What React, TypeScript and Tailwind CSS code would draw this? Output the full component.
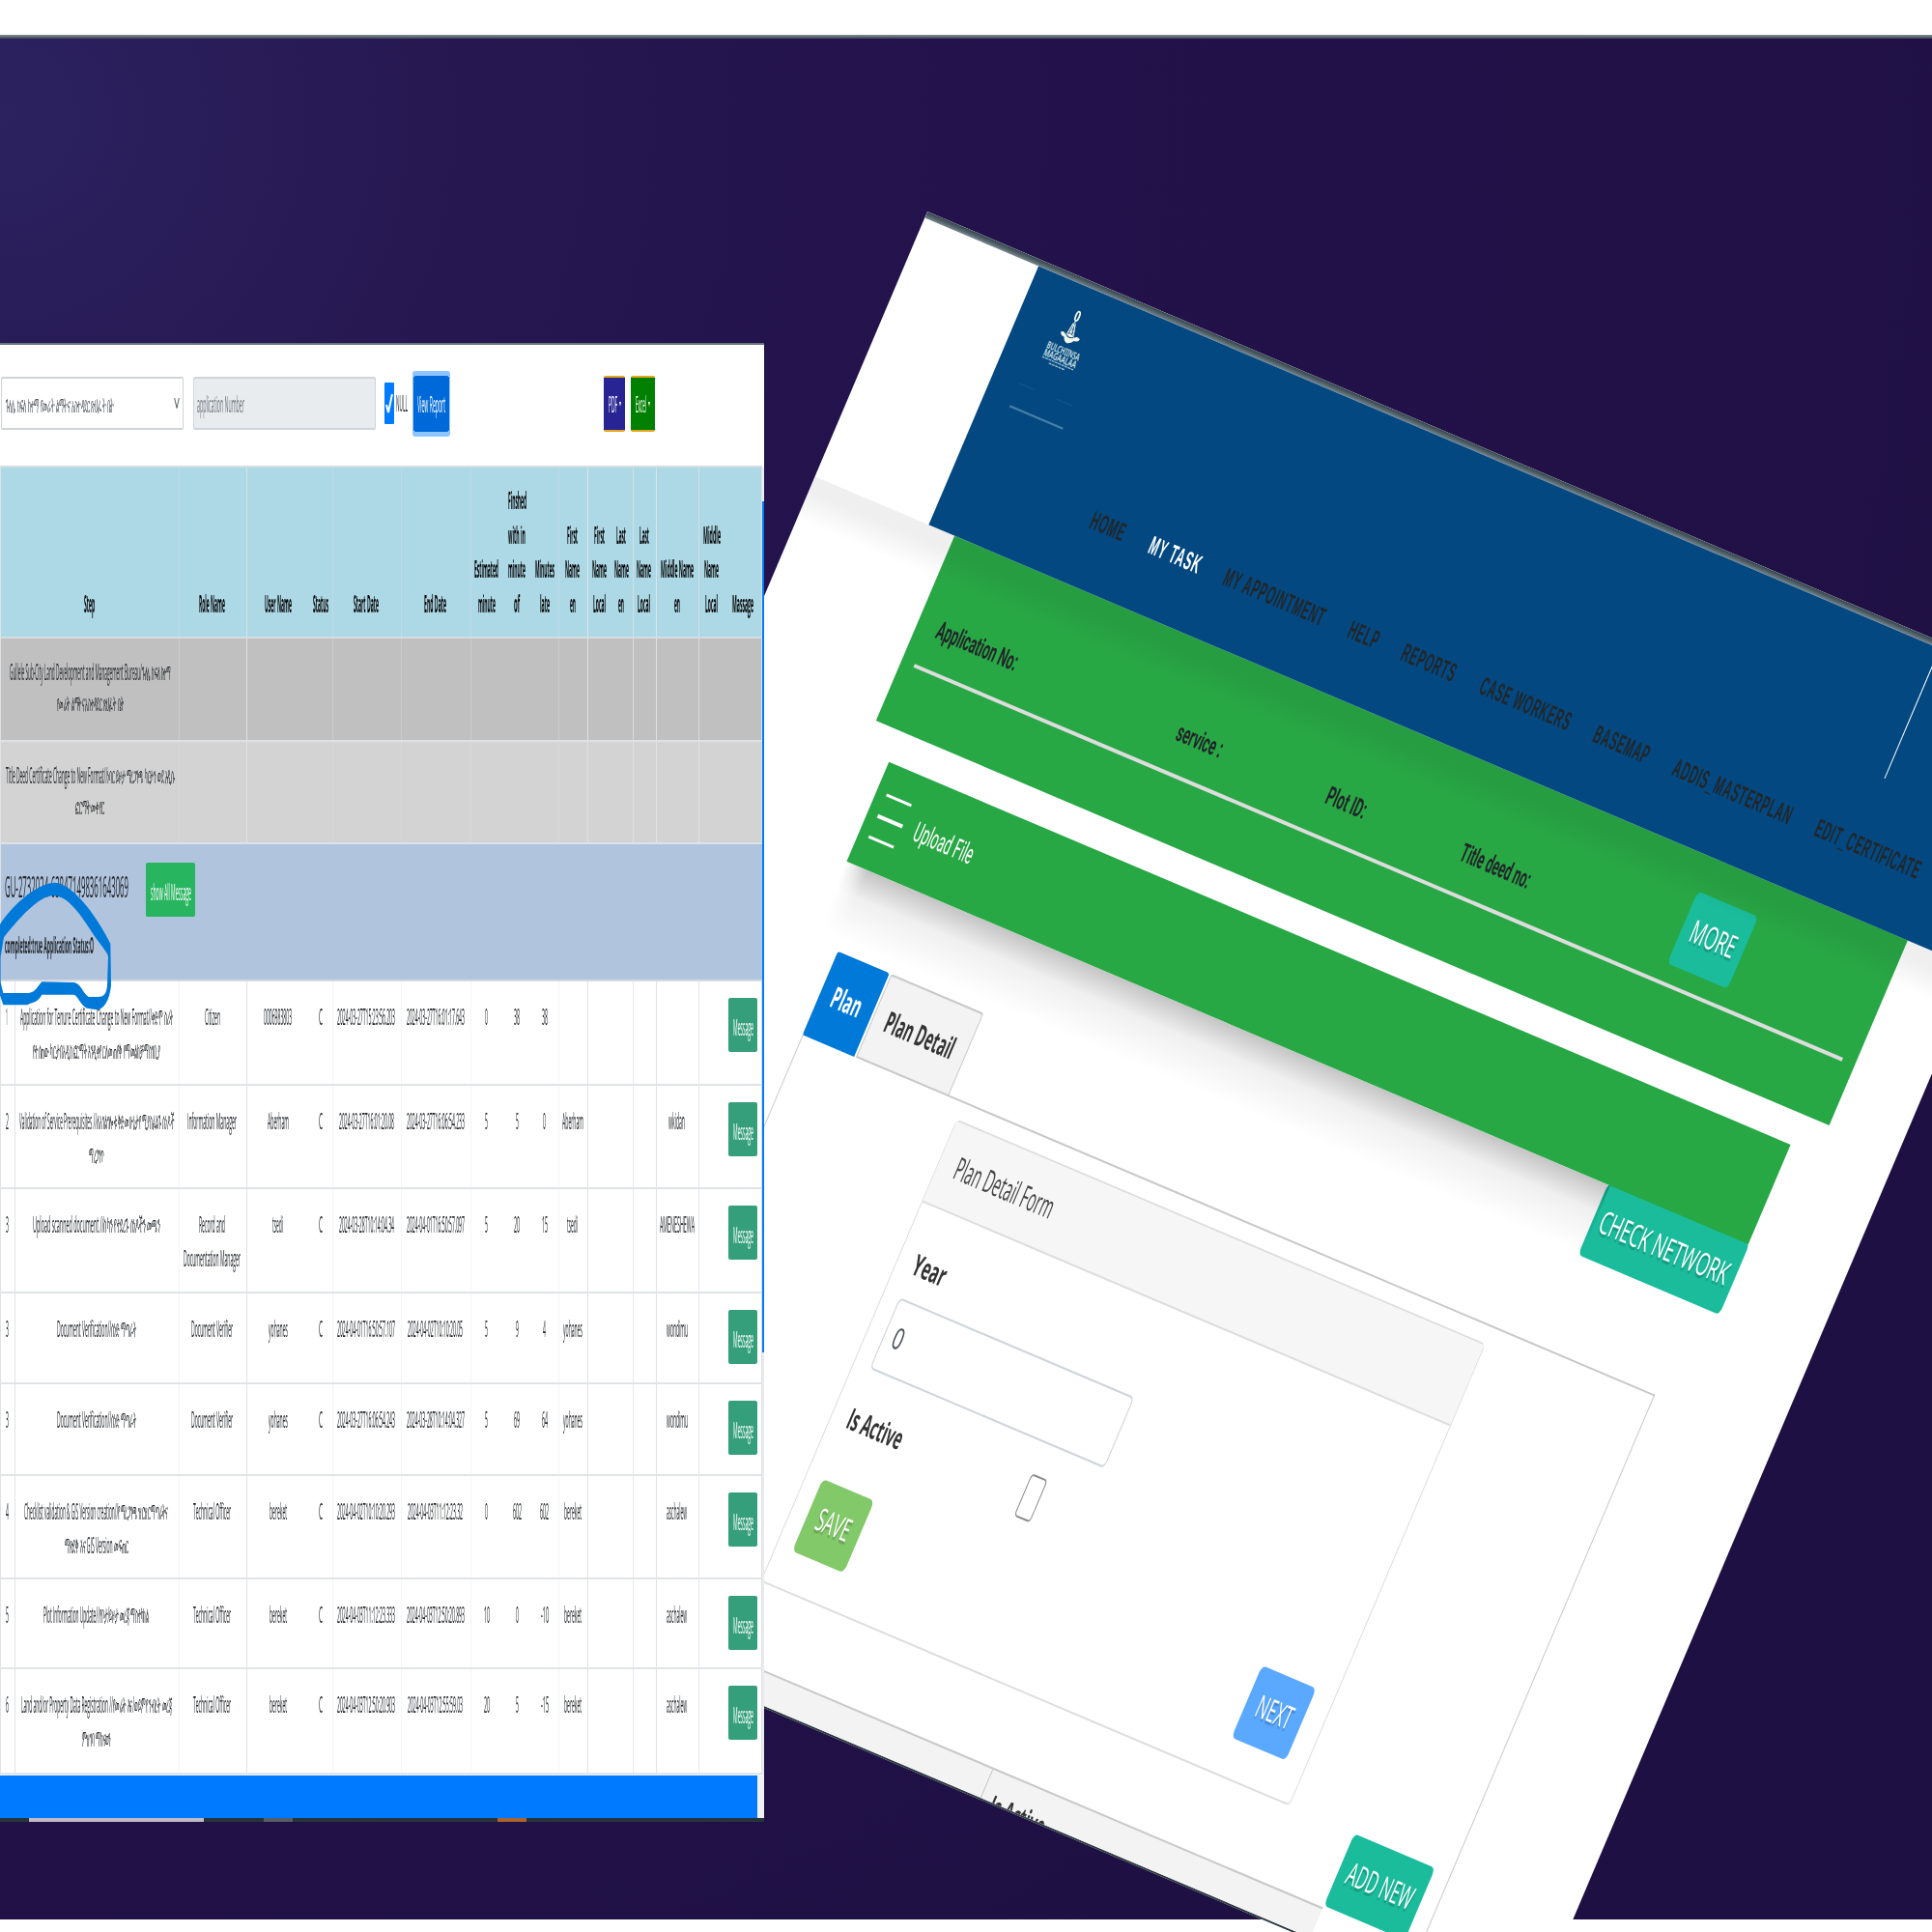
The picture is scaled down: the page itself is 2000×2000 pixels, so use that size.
import { useLayoutEffect, useRef, useState } from "react";
import type { ReactNode } from "react";
import clsx from "clsx";

/** A single line of text squeezed horizontally to an exact width. */
function Fit({ w, className, children }: { w: number; className?: string; children: ReactNode }) {
  const ref = useRef<HTMLSpanElement>(null);
  const [scale, setScale] = useState(1);
  useLayoutEffect(() => {
    const natural = ref.current?.offsetWidth ?? 0;
    if (natural > 0) setScale(w / natural);
  }, [w]);
  return (
    <span className={clsx("block shrink-0 text-left", className)} style={{ width: w }}>
      <span ref={ref} className="inline-block origin-left whitespace-nowrap" style={{ transform: `scaleX(${scale})` }}>
        {children}
      </span>
    </span>
  );
}

type Line = [text: string, width: number];

const COLS = "grid grid-cols-[15px_170px_70px_65px_24px_71px_72px_33px_30px_28px_30px_24px_23px_24px_44px_27px_38px]";

const LINE_FAINT = "border-r border-[#dee2e6]/35";
const LINE_MID = "border-r border-[#dee2e6]/80";
const LINE_STRONG = "border-r border-[#dee2e6]";

const COL_LINES = [
  LINE_STRONG, LINE_FAINT, LINE_STRONG, "", LINE_FAINT, LINE_FAINT, LINE_FAINT, "", "", LINE_FAINT,
  LINE_STRONG, "", LINE_MID, LINE_STRONG, LINE_MID, "", LINE_STRONG,
];

const HEADERS: Line[][] = [
  [["Step", 11]],
  [["Role Name", 27]],
  [["User Name", 28]],
  [["Status", 16]],
  [["Start Date", 26]],
  [["End Date", 23]],
  [["Estimated", 25], ["minute", 18]],
  [["Finshed", 19], ["with in", 18], ["minute", 18], ["of", 6]],
  [["Minutes", 20], ["late", 10]],
  [["First", 11], ["Name", 15], ["en", 6]],
  [["First", 11], ["Name", 15], ["Local", 13]],
  [["Last", 10], ["Name", 15], ["en", 6]],
  [["Last", 10], ["Name", 15], ["Local", 13]],
  [["Middle Name", 34], ["en", 6]],
  [["Middle", 18], ["Name", 15], ["Local", 13]],
  [["Massage", 22]],
];

type Row = { h: string; cells: Line[][] };

const C: Line[] = [["C", 4]];
const none: Line[] = [];
const verifier: Line[] = [["Document Verifier", 43]];
const verification: Line[] = [["Document Verification//ሰነድ ማጣራት", 82]];
const officer: Line[] = [["Technical Officer", 39]];

const ROWS: Row[] = [
  {
    h: "h-[107.5px]",
    cells: [
      [["1", 2]],
      [["Application for Tenure Certificate Change to New Format//ቀድሞ ስሪት", 158], ["የተሰጠው ካርታ በአዲስ ፎርማት እንዲቀየር ለመጠየቅ የማመልከቻ ማስገቢያ", 132]],
      [["Citizen", 16]], [["0006983803", 29]], C,
      [["2024-03-27T15:23:56.203", 60]], [["2024-03-27T16:01:17.643", 60]],
      [["0", 3]], [["38", 6]], [["38", 6]], none, none, none, none, none, none,
    ],
  },
  {
    h: "h-[107.5px]",
    cells: [
      [["2", 3]],
      [["Validation of Service Prerequisites //ለአገልግሎቱ ቅድመ ሁኔታ የሚያስፈልጉ ሰነዶች", 160], ["ማረጋገጥ", 16]],
      [["Information Manager", 51]], [["Aberham", 22]], C,
      [["2024-03-27T16:01:20.08", 57]], [["2024-03-27T16:06:54.233", 60]],
      [["5", 3]], [["5", 3]], [["0", 3]], [["Aberham", 22]], none, none, none, [["wkidan", 17]], none,
    ],
  },
  {
    h: "h-[107.5px]",
    cells: [
      [["3", 3]],
      [["Upload scanned document //ስካን የተደረጉ ሰነዶችን መጫን", 132]],
      [["Record and", 27], ["Documentation Manager", 59]], [["tsedi", 11]], C,
      [["2024-03-28T10:14:04.34", 57]], [["2024-04-01T16:50:57.097", 60]],
      [["5", 3]], [["20", 6]], [["15", 6]], [["tsedi", 11]], none, none, none, [["AMENESHEWA", 36]], none,
    ],
  },
  {
    h: "h-[94.5px]",
    cells: [
      [["3", 3]], verification, verifier, [["yohanes", 20]], C,
      [["2024-04-01T16:50:57.107", 60]], [["2024-04-02T10:10:20.05", 57]],
      [["5", 3]], [["9", 3]], [["4", 3]], [["yohanes", 20]], none, none, none, [["wondimu", 22]], none,
    ],
  },
  {
    h: "h-[94.5px]",
    cells: [
      [["3", 3]], verification, verifier, [["yohanes", 20]], C,
      [["2024-03-27T16:06:54.243", 60]], [["2024-03-28T10:14:04.327", 60]],
      [["5", 3]], [["69", 6]], [["64", 6]], [["yohanes", 20]], none, none, none, [["wondimu", 22]], none,
    ],
  },
  {
    h: "h-[107.5px]",
    cells: [
      [["4", 3]],
      [["Checklist validation & GIS Version creation//የማረጋገጫ ዝርዝር ማጣራትና", 149], ["ማጽደቅ እና GIS Version መፍጠር", 66]],
      officer, [["bereket", 18]], C,
      [["2024-04-02T10:10:20.293", 60]], [["2024-04-03T11:12:23.32", 57]],
      [["0", 3]], [["602", 9]], [["602", 9]], [["bereket", 18]], none, none, none, [["aschalew", 21]], none,
    ],
  },
  {
    h: "h-[92.5px]",
    cells: [
      [["5", 3]], [["Plot Information Update//የቦታ/ይዞታ መረጃ ማስተካከል", 109]],
      officer, [["bereket", 18]], C,
      [["2024-04-03T11:12:23.333", 60]], [["2024-04-03T12:50:20.893", 60]],
      [["10", 6]], [["0", 3]], [["-10", 8]], [["bereket", 18]], none, none, none, [["aschalew", 21]], none,
    ],
  },
  {
    h: "h-[109.5px]",
    cells: [
      [["6", 3]],
      [["Land and/or Property Data Registration //የመሬት እና/ወይም የንብረት መረጃ", 156], ["ምዝገባ ማከናወን", 30]],
      officer, [["bereket", 18]], C,
      [["2024-04-03T12:50:20.903", 60]], [["2024-04-03T12:55:59.03", 57]],
      [["20", 6]], [["5", 3]], [["-15", 8]], [["bereket", 18]], none, none, none, [["aschalew", 21]], none,
    ],
  },
];

function Lines({ lines }: { lines: Line[] }) {
  return (
    <>
      {lines.map(([t, w], i) => (
        <Fit key={i} w={w}>{t}</Fit>
      ))}
    </>
  );
}

function GroupRow({ className, lines }: { className: string; lines: Line[] }) {
  return (
    <div className={clsx(COLS, "border-b-2 border-[#dee2e6] text-[23px] font-medium leading-[31.5px] text-[#212529]", className)}>
      <div className={clsx("col-span-2 flex flex-col items-center pt-[19px]", LINE_FAINT)}>
        <Lines lines={lines} />
      </div>
      {COL_LINES.slice(2).map((line, i) => (
        <div key={i} className={line} />
      ))}
    </div>
  );
}

function ReportWindow() {
  return (
    <section className="absolute left-0 top-[355px] z-10 w-[791px] overflow-hidden font-['Open_Sans','Noto_Sans',sans-serif]">
      <div className="relative h-[1527px] overflow-hidden border-t-2 border-[#667780] bg-white">
        <div className="flex h-[125px] items-start text-[24px] leading-[54px] text-[#495057]">
          <div className="ml-px mt-[33px] flex h-[55px] w-[189px] items-center justify-between rounded-[2px] border border-y-2 border-[#ced4da] bg-white pl-1 pr-[3px]">
            <Fit w={112} className="text-[22px] font-medium">ጉለሌ ክፍለ ከተማ የመሬት ልማትና አስተዳደር ጽህፈት ቤት</Fit>
            <svg viewBox="0 0 6 14" className="h-[14px] w-[6px] fill-none stroke-[#495057]" strokeWidth="0.9">
              <path d="M0.7 1 3 11.5 5.3 1" />
            </svg>
          </div>
          <div className="ml-[10px] mt-[33px] flex h-[55px] w-[189px] items-center rounded-[2px] border border-y-2 border-[#ced4da] bg-[#e9ecef] pl-[3px] text-[#6c757d]">
            <Fit w={49}>application Number</Fit>
          </div>
          <div className="ml-[9px] mt-[39px] flex h-[43px] w-[10px] items-center justify-center rounded-[1px] bg-[#007bff]">
            <svg viewBox="0 0 8 28" className="h-[28px] w-[8px] fill-none stroke-white" strokeWidth="2">
              <path d="M1 15 3 23 7 4" />
            </svg>
          </div>
          <Fit w={12} className="ml-[2px] mt-[33px] text-[#212529]">NULL</Fit>
          <div className="ml-[5px] mt-[27px] rounded-[3px] border-x border-y-[5px] border-[#8fc5ff]">
            <div className="flex h-[58px] w-[37px] items-center justify-center rounded-[2px] bg-[#0069d9] text-white">
              <Fit w={29}>View Report</Fit>
            </div>
          </div>
          <div className="ml-[159px] mt-[32px] flex h-[58px] w-[22px] items-center justify-center gap-[2px] rounded-[2px] border-y-2 border-[#e3a71c] bg-[#282494] text-white">
            <Fit w={9}>PDF</Fit>
            <span className="border-x-[1.5px] border-t-[5px] border-x-transparent border-t-white" />
          </div>
          <div className="ml-[6px] mt-[32px] flex h-[58px] w-[24.5px] items-center justify-center gap-[2px] rounded-[2px] border-y-2 border-[#e3a71c] bg-[#008000] text-white">
            <Fit w={11}>Excel</Fit>
            <span className="border-x-[1.5px] border-t-[5px] border-x-transparent border-t-white" />
          </div>
        </div>

        <div className="w-[789px] border-l border-[#dee2e6] bg-white">
          <div className={clsx(COLS, "h-[179px] border-y-2 border-[#d5dde2] bg-[#add8e6] pb-[17px] text-[25px] font-bold leading-[35.4px] text-black")}>
            {HEADERS.map((lines, i) => (
              <div
                key={i}
                className={clsx("-mb-[17px] flex flex-col items-center justify-end pb-[17px] pr-[1.5px]", COL_LINES[i + 1], i === 0 && "col-span-2")}
              >
                <Lines lines={lines} />
              </div>
            ))}
          </div>
          <GroupRow
            className="h-[107px] bg-[#c0c0c0]"
            lines={[["Gullele Sub-City Land Development and Management Bureau/ጉለሌ ክፍለ ከተማ", 167], ["የመሬት ልማትና አስተዳደር ጽህፈት ቤት", 69]]}
          />
          <GroupRow
            className="h-[106px] bg-[#d3d3d3]"
            lines={[["Title Deed Certificate Change to New Format//ነባር ይዞታ ማረጋገጫ ካርታን ወደ አዲሱ", 175], ["ፎርማት መቀየር", 30]]}
          />
          <div className="h-[142px] border-b-2 border-[#d5dae2] bg-[#b0c4de] pl-[4px] text-[#212529]">
            <div className="flex h-[75px] items-end">
              <Fit w={128} className="mb-[10px] text-[31px] font-medium leading-[44px]">GU-2732024-638471498361643069</Fit>
              <div className="ml-[18px] flex h-[56px] w-[51px] items-center justify-center rounded-[2px] bg-[#28b560] text-[24px] text-white">
                <Fit w={42} className="mt-1 font-medium">show All Message</Fit>
              </div>
            </div>
            <Fit w={92} className="mt-[11px] text-[24px] font-bold leading-[35px]">completed:true Application Status:O</Fit>
          </div>
          {ROWS.map((row, r) => (
            <div key={r} className={clsx(COLS, row.h, "border-b-2 border-[#e0e4e8] text-[24px] font-medium leading-[35.4px] text-[#212529]")}>
              {row.cells.map((lines, i) => (
                <div key={i} className={clsx("flex flex-col items-center pr-[1.5px] pt-[18px]", COL_LINES[i])}>
                  <Lines lines={lines} />
                </div>
              ))}
              <div className="flex justify-end border-r border-[#dee2e6] pr-[4px] pt-[17px]">
                <div className="flex h-[56px] w-[30px] items-center justify-center rounded-[2px] bg-[#359f7b] text-white">
                  <Fit w={21} className="mt-1">Message</Fit>
                </div>
              </div>
            </div>
          ))}
        </div>
        <div className="flex h-[46px] w-full bg-[#f1f1f1] pt-[1px]">
          <div className="w-[784px] bg-[#007bff]" />
        </div>

        <div className="absolute right-0 top-[127px] h-[1353px] w-[2px] bg-[#e9ebed]">
          <div className="mt-[35px] h-[881px] bg-[#007bff]" />
        </div>
        <svg viewBox="0 0 360 420" className="absolute left-0 top-[550px] h-[140px] w-[120px]" fill="#0179d8" fillRule="evenodd">
          <path d="M0 150C30 100 110 22 170 20C230 22 310 140 343 210L345 340C340 390 320 415 300 415L270 410C250 400 240 370 230 368L130 368C115 395 100 390 85 400L10 400L0 370ZM12 190C60 130 120 62 165 60C210 60 250 120 280 165C300 200 335 235 336 250L333 340C330 370 320 375 305 375L275 375C255 360 250 332 230 330L130 328C115 345 110 360 90 363L10 363L2 330L2 250Z" />
        </svg>
      </div>
      <div className="flex h-[4px] bg-[#26343f]">
        <div className="ml-[30px] w-[181px] bg-[#bfb9c8]" />
        <div className="ml-[62px] w-[30px] bg-[#565c68]" />
        <div className="ml-[212px] w-[30px] bg-[#a8652f]" />
      </div>
    </section>
  );
}

const NAV: Line[] = [
  ["HOME", 38], ["MY TASK", 57], ["MY APPOINTMENT", 112], ["HELP", 33], ["REPORTS", 60],
  ["CASE WORKERS", 101], ["BASEMAP", 61], ["ADDIS_MASTERPLAN", 133], ["EDIT_CERTIFICATE", 117],
];

function CityLogo() {
  return (
    <svg viewBox="0 0 60 133" className="h-[133px] w-[60px] overflow-visible">
      <g fill="none" stroke="#f2f6e8">
        <ellipse cx="28.5" cy="19" rx="1.8" ry="5" strokeWidth="1.8" />
        <path d="M28.5 24v3M27.5 27l-2 13M29.5 27l3 13M28.5 28v12" strokeWidth="1.1" />
        <path d="M26 38l6-4M26 34l6 5" strokeWidth=".7" />
      </g>
      <path d="M19 40q3-2 5 1q5-4 10 0q2-3 6-1q0 4-5 4q-2 4-6 5q-4-1-5-5q-5 0-5-4Z" fill="#f2f6e8" />
      <path d="M25 41q4 3 8 0" stroke="#00497f" strokeWidth="1" fill="none" />
      <g fill="#d5e2e3" fontFamily="'Noto Sans', sans-serif" fontWeight="600">
        <text x="11" y="61.5" fontSize="10.5" textLength="36" lengthAdjust="spacingAndGlyphs">BULCHIINSA</text>
        <text x="11" y="70" fontSize="10.5" textLength="36" lengthAdjust="spacingAndGlyphs">MAGAALAA</text>
      </g>
      <path d="M11 71.8h35M20 75.3h18" stroke="#9dbbca" strokeWidth="1.4" strokeDasharray="3 .6" />
      <path d="M0 106.5h17M42 106.5h18" stroke="#15568c" strokeWidth="1" />
      <path d="M0 132h60" stroke="#4a80a5" strokeWidth="2" />
    </svg>
  );
}

function Action({ w, className, label }: { w: number; className: string; label: string }) {
  return (
    <div className={clsx("flex h-[81px] shrink-0 justify-center rounded-[4px/8px] text-[33px] leading-[77px] text-white", className)}>
      <Fit w={w} className="[text-shadow:1px_3px_2px_rgba(0,0,0,0.22)]">{label}</Fit>
    </div>
  );
}

function TaskWindow() {
  return (
    <section className="absolute left-[960px] top-[219px] flex h-[1492px] w-[1306px] origin-top-left rotate-[23deg] flex-col overflow-hidden border-b-2 border-[#2c3a40] bg-white font-['Open_Sans','Noto_Sans',sans-serif] text-[#212529]">
      <div className="h-[7px] shrink-0 bg-linear-to-b from-[#33444a] via-[#4f6068] to-[#7b8890]" />
      <header className="relative ml-[127.5px] h-[291px] shrink-0 bg-[#034880] pl-[29.5px] pt-[13px]">
        <div className="flex">
          <CityLogo />
          <div className="ml-[924px] w-px bg-white" />
        </div>
        <nav className="mt-[61px] flex gap-[27.5px] pl-[124px] font-['Liberation_Sans',Arial,sans-serif] text-[27px] font-bold leading-[26px] tracking-[2px] text-[#222628]">
          {NAV.map(([t, w]) => (
            <Fit key={t} w={w} className={t === "MY TASK" ? "text-white" : undefined}>{t}</Fit>
          ))}
        </nav>
        <div className="absolute -left-[127.5px] right-0 top-full z-10 h-[48px] bg-linear-to-b from-black/[0.062] from-35% to-transparent" />
      </header>

      <div className="ml-[156.5px] h-[208px] w-[1072.5px] shrink-0 bg-[#28a745] px-[14px] pt-[38px]">
        <div className="flex items-start pl-[8px] font-[Roboto,sans-serif] text-[27px] font-bold leading-[27px]">
          <Fit w={89} className="mt-[45px]">Application No:</Fit>
          <Fit w={49.5} className="ml-[181px] mt-[45px]">service :</Fit>
          <Fit w={43.5} className="ml-[118.5px] mt-[45px]">Plot ID:</Fit>
          <Fit w={77} className="ml-[108px] mt-[45px]">Title deed no:</Fit>
          <Action w={49} label="MORE" className="ml-[164px] w-[68px] bg-[#1abc9c] font-['Open_Sans',sans-serif] font-normal" />
        </div>
        <hr className="mt-[19px] h-[4px] border-0 bg-[#dddddd]" />
      </div>

      <div className="relative z-10 ml-[185.5px] mt-[34px] flex h-[112px] w-[1014px] shrink-0 bg-[#28a745] pl-[11px]">
        <div className="flex flex-col gap-5 pt-[30.5px]">
          <div className="h-[3.5px] w-[28px] bg-white" />
          <div className="h-[3.5px] w-[28px] bg-white" />
          <div className="h-[3.5px] w-[28px] bg-white" />
        </div>
        <Fit w={65} className="ml-[14px] mt-[41px] font-[Roboto,sans-serif] text-[29px] leading-[29px] text-white">Upload File</Fit>
        <div className="absolute left-0 top-full h-[76px] w-[859px] bg-linear-to-b from-black/[0.23] via-black/[0.06] via-40% to-transparent [mask-image:linear-gradient(to_right,transparent,black_24px)]" />
      </div>

      <div className="-mt-[2px] flex h-[91px] shrink-0 justify-end pr-[105px]">
        <Action w={143} label="CHECK NETWORK" className="w-[159px] bg-[#1abc9c]" />
      </div>

      <div className="ml-[213.5px] flex h-[94px] shrink-0 gap-[2px] text-[31px] font-bold leading-[89px]">
        <div className="flex w-[58.5px] justify-center rounded-t-[3px] bg-[#0079d9] text-white">
          <Fit w={32}>Plan</Fit>
        </div>
        <div className="flex w-[104px] justify-center rounded-t-[3px] border border-y-2 border-[#c8c8c8] bg-[#f3f3f3] text-[#333333]">
          <Fit w={76}>Plan Detail</Fit>
        </div>
      </div>

      <div className="-mt-[2px] ml-[213.5px] flex h-[623px] w-[958.5px] shrink-0">
        <div className="w-[58px] shrink-0 border-l border-[#c8c8c8]" />
        <div className="w-[106.5px] shrink-0" />
        <div className="grow border-r border-t-2 border-[#c8c8c8] pl-[17px] pt-[18px]">
          <div className="h-[520px] w-[595px] rounded-[4px/8px] border border-y-2 border-[#dddddd]">
            <div className="h-[91px] border-b-2 border-[#dddddd] bg-[#f6f6f6] pl-[18px] text-[33px] leading-[87px] text-[#444444]">
              <Fit w={109}>Plan Detail Form</Fit>
            </div>
            <div className="pl-[17px] text-[31px] text-[#333333]">
              <Fit w={35} className="mt-[39px] font-bold leading-[44px]">Year</Fit>
              <div className="mt-[17px] h-[80px] w-[264px] rounded-[4px/8px] border border-y-2 border-[#ced4da] pl-[9px] leading-[74px] text-[#495057]">
                <Fit w={11}>0</Fit>
              </div>
              <div className="flex h-[124px] items-start">
                <Fit w={60} className="mt-[32px] font-bold leading-[44px]">Is Active</Fit>
                <div className="ml-[137px] mt-[34px] h-[48px] w-[18px] rounded-[3px/6px] border border-y-2 border-[#8c8c8c]" />
              </div>
              <div className="flex">
                <Action w={36} label="SAVE" className="w-[58px] bg-[#82c96a]" />
                <Action w={38} label="NEXT" className="ml-[436px] w-[61px] bg-[#5aa9ff]" />
              </div>
            </div>
          </div>
          <div className="flex justify-end pr-[17px]">
            <Action w={72} label="ADD NEW" className="w-[91px] bg-[#1abc9c]" />
          </div>
        </div>
      </div>

      <div className="ml-[244px] flex h-[40px] w-[819px] shrink-0 border-t-2 border-[#c8c8c8] bg-[#f3f3f3] text-[31px] font-bold leading-[44px] text-[#333333]">
        <div className="w-[449px] border-r border-[#c8c8c8]" />
        <Fit w={61} className="ml-[11px] mt-[12px]">Is Active</Fit>
      </div>
    </section>
  );
}

export default function App() {
  return (
    <main className="relative flex h-[2000px] w-[2000px] flex-col overflow-hidden bg-white">
      <div className="h-[36px] shrink-0" />
      <div className="h-[4px] shrink-0 bg-linear-to-b from-[#8a9499] to-[#3c4450]" />
      <div className="grow bg-[radial-gradient(ellipse_2200px_2200px_at_0_80px,#2b225f_0%,#271852_20%,#23124b_45%,#211147_75%,#1f1044_100%)]" />
      <div className="h-[13px] shrink-0" />
      <TaskWindow />
      <ReportWindow />
    </main>
  );
}
